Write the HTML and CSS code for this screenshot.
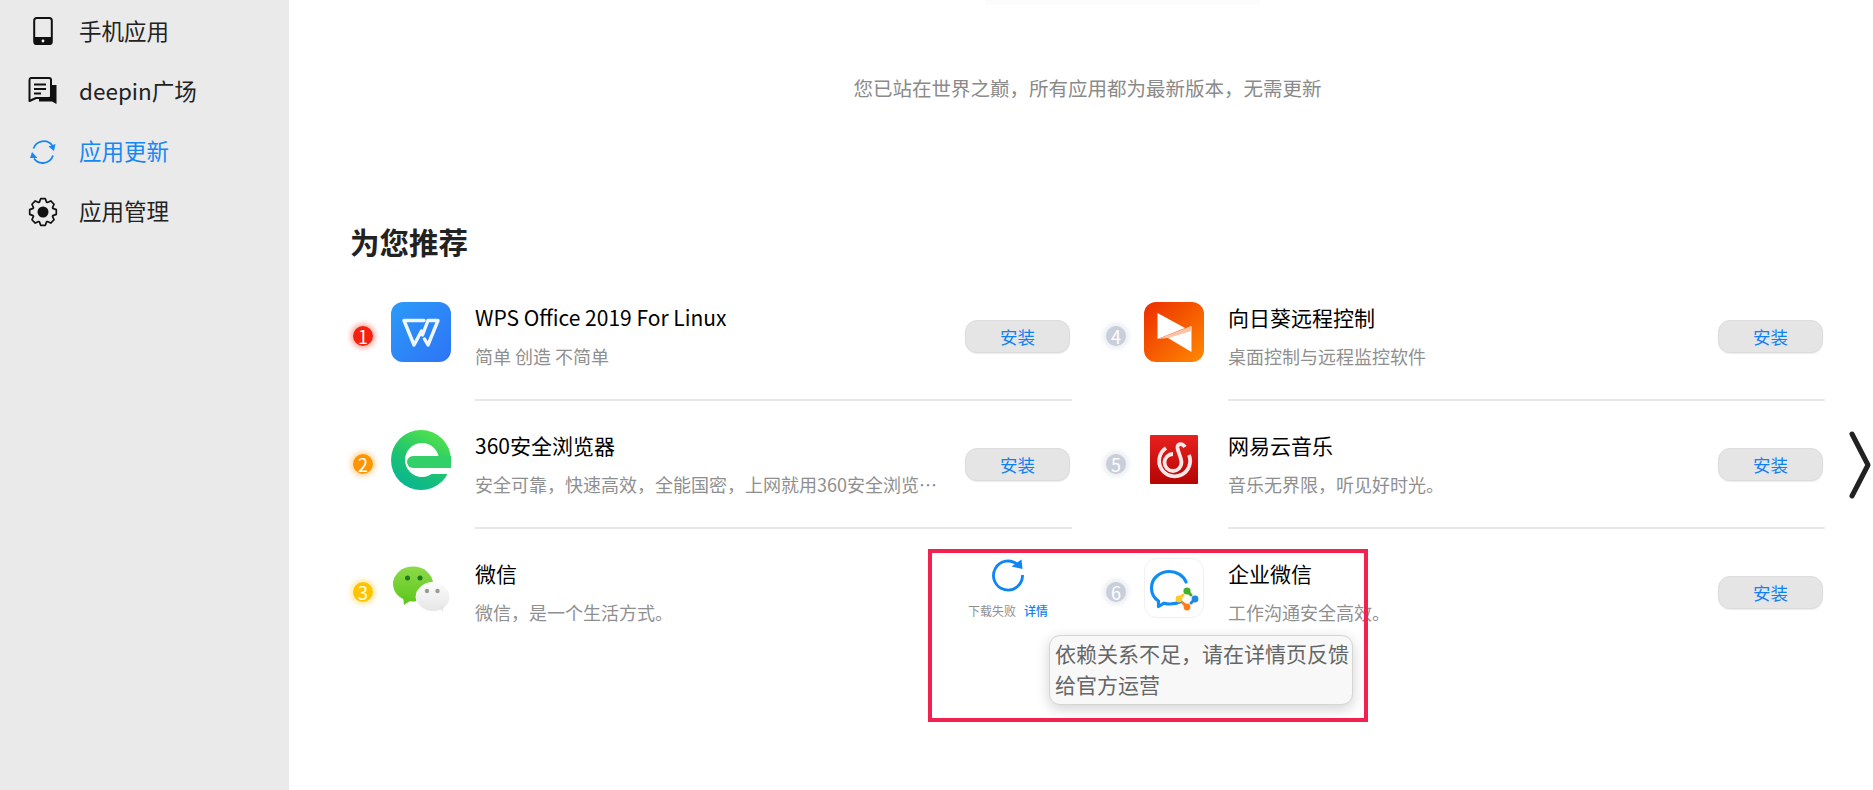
FILE: index.html
```html
<!DOCTYPE html>
<html lang="zh-CN">
<head>
<meta charset="utf-8">
<title>应用更新</title>
<link rel="stylesheet" href="styles.css">
</head>
<body>
<div class="app">
  <aside class="sidebar">
    <nav class="nav">
      <a class="nav-item">
        <svg class="nav-icon" viewBox="0 0 32 32"><rect x="7.2" y="2" width="17.6" height="26" rx="2.5" fill="none" stroke="#111" stroke-width="2"/><path d="M7 21H25V26a3 3 0 0 1-3 3H10a3 3 0 0 1-3-3Z" fill="#111"/><circle cx="16" cy="25" r="1.4" fill="#fff"/></svg>
        <span class="nav-label">手机应用</span>
      </a>
      <a class="nav-item">
        <svg class="nav-icon" viewBox="0 0 32 32"><path d="M20 9H29.500V28L25 25.500H12V20H20Z" fill="#111"/><path d="M4 2H22a2 2 0 0 1 2 2V20a2 2 0 0 1-2 2H9L2.500 25V4A2 2 0 0 1 4 2Z" fill="#eaeaea" stroke="#111" stroke-width="2" stroke-linejoin="round"/><path d="M7 8.500H19M7 13H19M7 17.500H14" stroke="#111" stroke-width="2.200" fill="none"/></svg>
        <span class="nav-label">deepin广场</span>
      </a>
      <a class="nav-item is-active">
        <svg class="nav-icon" viewBox="0 0 32 32"><path d="M6.500 12.500A10.800 10.800 0 0 1 25.300 9.500M26 19.500A10.800 10.800 0 0 1 7 22.500" fill="none" stroke="#1787f5" stroke-width="1.800"/><path d="M21.500 10.500 L28.500 8 L27 15Z M3 22 L5 16 L10.500 22Z" fill="#1787f5"/></svg>
        <span class="nav-label">应用更新</span>
      </a>
      <a class="nav-item">
        <svg class="nav-icon" viewBox="0 0 32 32"><polygon points="29.3,18.34 25.87,19.59 25.52,20.44 27.06,23.74 23.74,27.06 20.44,25.52 19.59,25.87 18.34,29.3 13.66,29.3 12.41,25.87 11.56,25.52 8.26,27.06 4.94,23.74 6.48,20.44 6.13,19.59 2.7,18.34 2.7,13.66 6.13,12.41 6.48,11.56 4.94,8.26 8.26,4.94 11.56,6.48 12.41,6.13 13.66,2.7 18.34,2.7 19.59,6.13 20.44,6.48 23.74,4.94 27.06,8.26 25.52,11.56 25.87,12.41 29.3,13.66" fill="none" stroke="#111" stroke-width="1.700" stroke-linejoin="round"/><circle cx="16" cy="16" r="5.500" fill="#111"/></svg>
        <span class="nav-label">应用管理</span>
      </a>
    </nav>
  </aside>

  <main class="main">
    <div class="top-fade"></div>
    <p class="notice">您已站在世界之巅，所有应用都为最新版本，无需更新</p>
    <h2 class="heading">为您推荐</h2>

    <div class="grid">
      <section class="row">
        <span class="rank rank-1">1</span>
        <svg class="app-icon" viewBox="0 0 60 60"><defs><linearGradient id="wps" x1="0" y1="0" x2="1" y2="1"><stop offset="0" stop-color="#2a9bf8"/><stop offset="1" stop-color="#2f73f6"/></linearGradient></defs><rect width="60" height="60" rx="12" fill="url(#wps)"/><path d="M33 18.500H13L23 43L30.500 29M47 18.500H37L31.500 33M47 18.500L37 43L33.500 37" fill="none" stroke="#fff" stroke-width="3.400" stroke-linejoin="round" stroke-linecap="round" opacity=".93"/></svg>
        <div class="body">
          <div class="text"><h3 class="name">WPS Office 2019 For Linux</h3><p class="desc">简单 创造 不简单</p></div>
          <button class="install">安装</button>
        </div>
      </section>

      <section class="row">
        <span class="rank rank-other">4</span>
        <svg class="app-icon" viewBox="0 0 60 60"><defs><linearGradient id="sun" x1="0" y1="0" x2="1" y2="1"><stop offset="0" stop-color="#ec2c00"/><stop offset="1" stop-color="#ff8a00"/></linearGradient></defs><rect width="60" height="60" rx="12" fill="url(#sun)"/><polygon points="13.500,11 41,26 13.500,37" fill="#fff"/><polygon points="47.500,24 47.500,50 24,36" fill="#fff"/><polygon points="13.500,37 47.500,24 47.500,29 24,36" fill="#ffc2a6"/></svg>
        <div class="body">
          <div class="text"><h3 class="name">向日葵远程控制</h3><p class="desc">桌面控制与远程监控软件</p></div>
          <button class="install">安装</button>
        </div>
      </section>

      <section class="row">
        <span class="rank rank-2">2</span>
        <svg class="app-icon" viewBox="0 0 60 60"><defs><linearGradient id="e360" x1=".8" y1="0" x2=".3" y2="1"><stop offset="0" stop-color="#55e548"/><stop offset=".55" stop-color="#1fc46f"/><stop offset="1" stop-color="#07b593"/></linearGradient></defs><circle cx="30" cy="30" r="30" fill="url(#e360)"/><circle cx="31" cy="30" r="17" fill="#fff"/><rect x="40" y="38" width="20" height="6" fill="#fff"/><path d="M22 26H60V38H22a6 6 0 0 1 0-12Z" fill="#33cf68"/></svg>
        <div class="body">
          <div class="text"><h3 class="name">360安全浏览器</h3><p class="desc">安全可靠，快速高效，全能国密，上网就用360安全浏览器。</p></div>
          <button class="install">安装</button>
        </div>
      </section>

      <section class="row">
        <span class="rank rank-other">5</span>
        <svg class="app-icon" viewBox="0 0 60 60"><defs><linearGradient id="ne" x1="0" y1="0" x2="0" y2="1"><stop offset="0" stop-color="#e8211f"/><stop offset="1" stop-color="#b50503"/></linearGradient></defs><rect x="6" y="5" width="48" height="49" rx="1" fill="url(#ne)"/><path d="M22 18A15.500 15.500 0 1 0 45 25" fill="none" stroke="#fff" stroke-width="3.800" opacity=".9"/><path d="M41 17C38.500 13 33 13 33.500 18C34 22 37.500 28 37.500 32.500A8.500 8.500 0 1 1 29 24" fill="none" stroke="#fff" stroke-width="3.800" opacity=".9"/></svg>
        <div class="body">
          <div class="text"><h3 class="name">网易云音乐</h3><p class="desc">音乐无界限，听见好时光。</p></div>
          <button class="install">安装</button>
        </div>
      </section>

      <section class="row row-last">
        <span class="rank rank-3">3</span>
        <svg class="app-icon" viewBox="0 0 60 60"><defs><linearGradient id="wx" x1="0" y1="0" x2="0" y2="1"><stop offset="0" stop-color="#8ed94a"/><stop offset="1" stop-color="#5fc81e"/></linearGradient><linearGradient id="wx2" x1="0" y1="0" x2="0" y2="1"><stop offset="0" stop-color="#fbfbfb"/><stop offset="1" stop-color="#e6e6e6"/></linearGradient></defs><ellipse cx="22" cy="26" rx="20" ry="17.500" fill="url(#wx)"/><path d="M12 38L13 47L22 41Z" fill="#60c820"/><ellipse cx="42" cy="39" rx="17" ry="14.500" fill="url(#wx2)" stroke="#fff"/><path d="M48 50L52 54L52 47Z" fill="#e6e6e6"/><circle cx="16.500" cy="20" r="2.500" fill="#1f7a1a"/><circle cx="29" cy="20" r="2.500" fill="#1f7a1a"/><circle cx="36" cy="33" r="2.200" fill="#999"/><circle cx="46.500" cy="33" r="2.200" fill="#999"/></svg>
        <div class="body">
          <div class="text"><h3 class="name">微信</h3><p class="desc">微信，是一个生活方式。</p></div>
          <div class="failed">
            <svg class="retry" viewBox="0 0 34 34"><path d="M27 7A14.500 14.500 0 1 0 31.500 17" fill="none" stroke="#0f84f7" stroke-width="2.800"/><path d="M20.500 8.500L31.500 11L30.500 1.500Z" fill="#0f84f7"/></svg>
            <div class="failed-text"><span>下载失败</span><a class="detail">详情</a></div>
          </div>
        </div>
      </section>

      <section class="row row-last">
        <span class="rank rank-other">6</span>
        <svg class="app-icon" viewBox="0 0 60 60"><rect x=".5" y=".5" width="59" height="59" rx="12" fill="#fff" stroke="#f0f0f0"/><path d="M37 43.500C33 45.500 29.500 46 26 46C24 46 22 45.800 20 45.200L14.500 48.500L14.500 43C9.800 40 7.500 35 7.500 30C7.500 20 16 13.500 25.500 13.500C33 13.500 39.500 17.500 42 24" fill="none" stroke="#0f8cf5" stroke-width="3.200" stroke-linejoin="round" stroke-linecap="round"/><path d="M35 41L39 37" stroke="#ffc91f" stroke-width="3" stroke-linecap="round"/><circle cx="35" cy="41" r="3.400" fill="#ffc91f"/><path d="M43 33L47 37" stroke="#43b02a" stroke-width="3" stroke-linecap="round"/><circle cx="43" cy="33" r="3.600" fill="#43b02a"/><path d="M51 41L47 45" stroke="#1e88e5" stroke-width="3" stroke-linecap="round"/><circle cx="51" cy="41" r="3.400" fill="#1e88e5"/><path d="M43 49L39 45" stroke="#ff7a1a" stroke-width="3" stroke-linecap="round"/><circle cx="43" cy="49" r="3.400" fill="#ff7a1a"/></svg>
        <div class="body">
          <div class="text"><h3 class="name">企业微信</h3><p class="desc">工作沟通安全高效。</p></div>
          <button class="install">安装</button>
        </div>
      </section>
    </div>

    <svg class="next" viewBox="0 0 24 70"><path d="M4 4L20 35L4 66" fill="none" stroke="#222" stroke-width="5" stroke-linecap="round" stroke-linejoin="round"/></svg>
    <div class="tooltip">依赖关系不足，请在详情页反馈给官方运营</div>
    <div class="callout"></div>
  </main>
</div>
</body>
</html>
```
FILE: styles.css
```css
* { box-sizing: border-box; }
html, body { margin: 0; height: 100%; overflow: hidden; background: #fff; }
body { font-family: "Noto Sans CJK SC", "Noto Sans", sans-serif; }

.app { display: flex; height: 790px; }

.sidebar { width: 289px; flex: none; background: #eaeaea; }
.nav { display: flex; flex-direction: column; padding-top: 2px; }
.nav-item { display: flex; align-items: center; gap: 20px; height: 60px; padding-left: 27px; font-size: 22.500px; color: #222; }
.nav-item.is-active { color: #1787f5; }
.nav-icon { width: 32px; height: 32px; flex: none; }
.nav-label { padding-bottom: 5px; }

.main { position: relative; flex: 1; padding: 70px 48px 0 61px; }
.top-fade { position: absolute; left: 696px; top: 0; width: 275px; height: 5px; background: #fcfcfc; }
.notice { margin: 0; height: 36px; line-height: 36px; text-align: center; font-size: 19.500px; color: #8a8a8a; }
.heading { margin: 115px 0 0; height: 40px; line-height: 40px; font-size: 29.500px; font-weight: 700; color: #222; }

.grid { display: grid; grid-template-columns: 722px 722px; column-gap: 31px; margin-top: 12px; }
.row { display: flex; align-items: flex-start; height: 128px; }
.rank { flex: none; width: 20px; height: 20px; margin: 53px 18px 0 3px; border-radius: 50%; color: #fff; font-size: 18px; line-height: 20px; text-align: center; }
.rank-1 { background: #f5210f; box-shadow: 0 0 4px 3px rgba(245, 33, 15, .3); }
.rank-2 { background: #ff9500; box-shadow: 0 0 4px 3px rgba(255, 149, 0, .3); }
.rank-3 { background: #ffc400; box-shadow: 0 0 4px 3px rgba(255, 196, 0, .3); }
.rank-other { background: #c9cedb; box-shadow: 0 0 4px 3px rgba(201, 206, 219, .35); }
.app-icon { flex: none; width: 60px; height: 60px; margin: 29px 24px 0 0; }
.body { flex: 1; min-width: 0; height: 128px; display: flex; justify-content: space-between; align-items: flex-start; border-bottom: 2px solid #e8e8e8; }
.row-last .body { border-bottom: none; }
.text { width: 462px; padding-top: 29px; }
.name { margin: 0; height: 30px; line-height: 30px; font-size: 21px; font-weight: 400; color: #000; white-space: nowrap; }
.desc { margin: 11px 0 0; height: 26px; line-height: 26px; font-size: 18px; color: #8f8f8f; white-space: nowrap; overflow: hidden; text-overflow: ellipsis; }
.install { width: 105px; height: 33px; margin: 47px 2px 0 0; padding: 0; border: 1px solid #dcdcdc; border-radius: 12px; background: #e5e5e5; box-shadow: 0 1px 1px rgba(0, 0, 0, .08); color: #1080f5; font: inherit; font-size: 17.500px; line-height: 30px; }

.failed { display: flex; flex-direction: column; align-items: center; width: 80px; margin: 29px 24px 0 0; }
.retry { width: 34px; height: 34px; }
.failed-text { display: flex; gap: 8px; margin-top: 10px; font-size: 12px; line-height: 18px; color: #8f8f8f; white-space: nowrap; }
.detail { color: #1080f5; font-weight: 500; }

.next { position: absolute; left: 1559px; top: 430px; width: 24px; height: 70px; }
.tooltip { position: absolute; left: 760px; top: 635px; width: 304px; height: 70px; padding: 2px 0 0 5px; border: 1px solid #d5d5d5; border-radius: 11px; background: #f8f8f8; box-shadow: 0 4px 14px rgba(0, 0, 0, .18); font-size: 21px; line-height: 31px; color: #666; }
.callout { position: absolute; left: 639px; top: 549px; width: 440px; height: 173px; border: 4px solid #f2214f; }
```
